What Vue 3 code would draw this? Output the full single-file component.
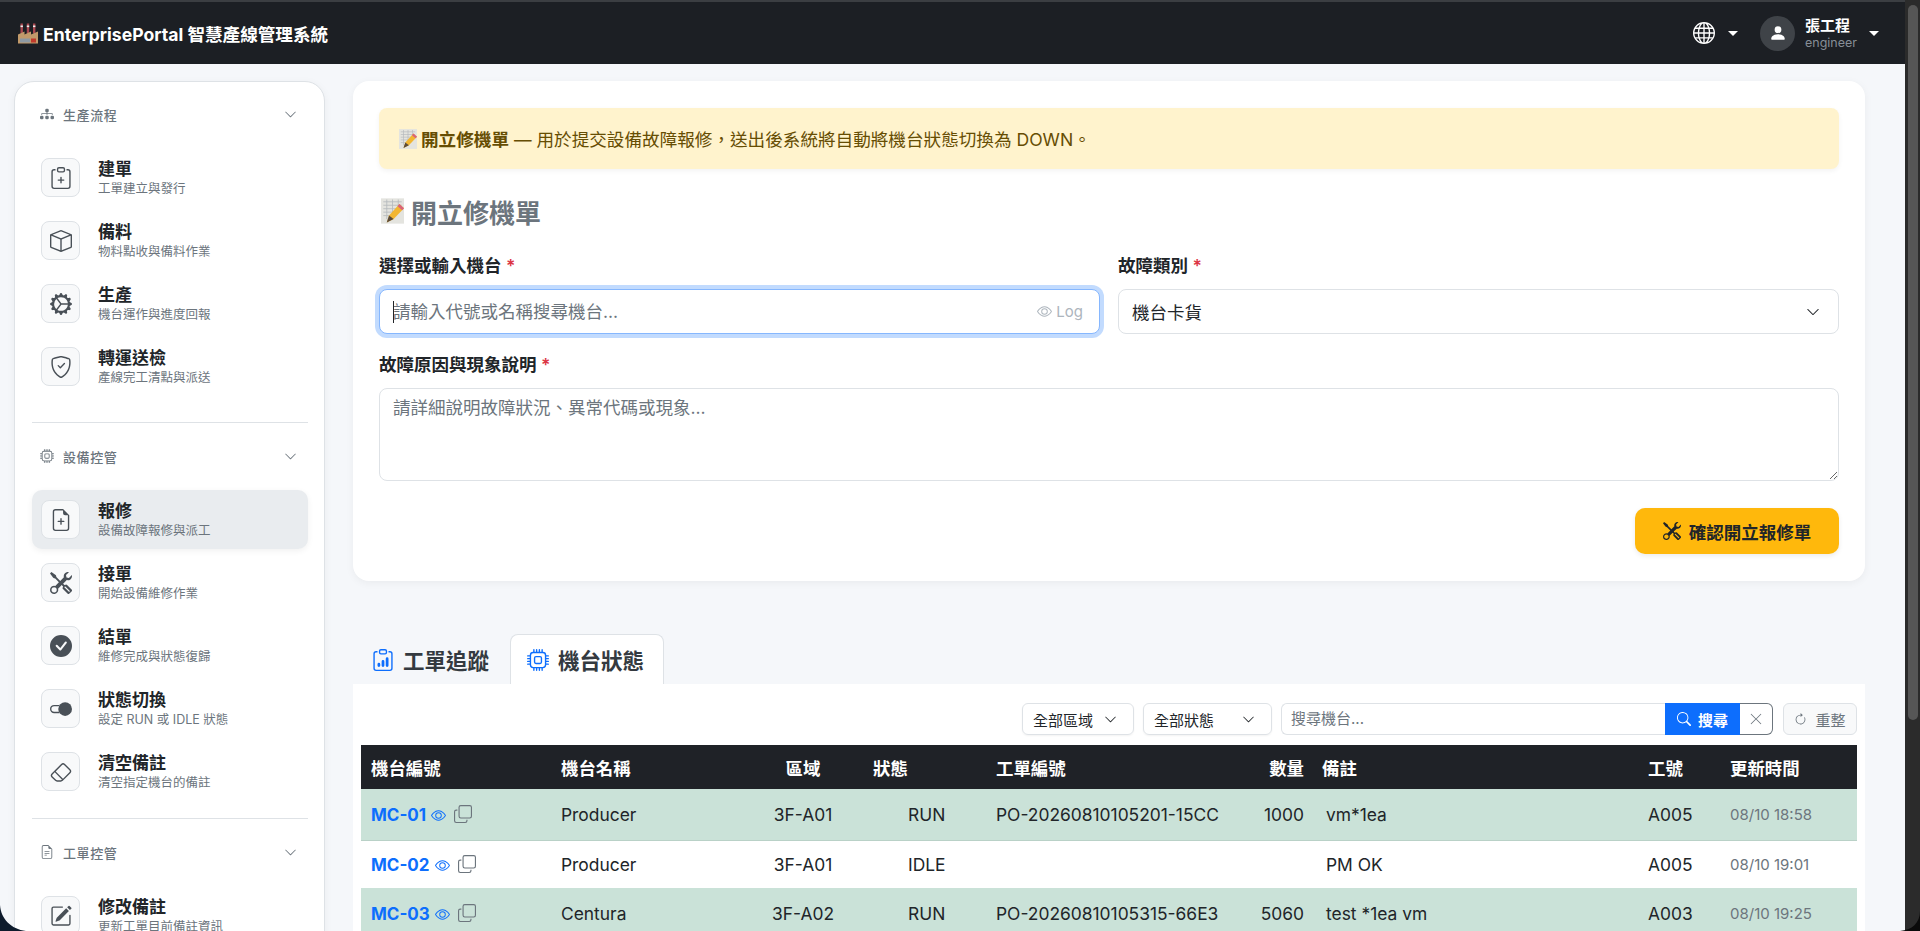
<script setup>
import { h } from 'vue'

const ICONS = {
  clipPlus: ['M8 7a.5.5 0 0 1 .5.5V9H10a.5.5 0 0 1 0 1H8.5v1.5a.5.5 0 0 1-1 0V10H6a.5.5 0 0 1 0-1h1.5V7.5A.5.5 0 0 1 8 7', 'M4 1.5H3a2 2 0 0 0-2 2V14a2 2 0 0 0 2 2h10a2 2 0 0 0 2-2V3.5a2 2 0 0 0-2-2h-1v1h1a1 1 0 0 1 1 1V14a1 1 0 0 1-1 1H3a1 1 0 0 1-1-1V3.5a1 1 0 0 1 1-1h1z', 'M9.5 1a.5.5 0 0 1 .5.5v1a.5.5 0 0 1-.5.5h-3a.5.5 0 0 1-.5-.5v-1a.5.5 0 0 1 .5-.5zm-3-1A1.5 1.5 0 0 0 5 1.5v1A1.5 1.5 0 0 0 6.5 4h3A1.5 1.5 0 0 0 11 2.5v-1A1.5 1.5 0 0 0 9.5 0z'],
  clipData: ['M4 11a1 1 0 1 1 2 0v1a1 1 0 1 1-2 0zm6-4a1 1 0 1 1 2 0v5a1 1 0 1 1-2 0zM7 9a1 1 0 0 1 2 0v3a1 1 0 1 1-2 0z', 'M4 1.5H3a2 2 0 0 0-2 2V14a2 2 0 0 0 2 2h10a2 2 0 0 0 2-2V3.5a2 2 0 0 0-2-2h-1v1h1a1 1 0 0 1 1 1V14a1 1 0 0 1-1 1H3a1 1 0 0 1-1-1V3.5a1 1 0 0 1 1-1h1z', 'M9.5 1a.5.5 0 0 1 .5.5v1a.5.5 0 0 1-.5.5h-3a.5.5 0 0 1-.5-.5v-1a.5.5 0 0 1 .5-.5zm-3-1A1.5 1.5 0 0 0 5 1.5v1A1.5 1.5 0 0 0 6.5 4h3A1.5 1.5 0 0 0 11 2.5v-1A1.5 1.5 0 0 0 9.5 0z'],
  box: ['M8.186 1.113a.5.5 0 0 0-.372 0L1.846 3.5 8 5.961 14.154 3.5zM15 4.239l-6.5 2.6v7.922l6.5-2.6V4.24zM7.5 14.762V6.838L1 4.239v7.925zM7.443.184a1.5 1.5 0 0 1 1.114 0l7.129 2.852A.5.5 0 0 1 16 3.5v8.662a1 1 0 0 1-.629.928l-7.185 2.874a.5.5 0 0 1-.372 0L.63 13.09a1 1 0 0 1-.63-.928V3.5a.5.5 0 0 1 .314-.464z'],
  gear: ['M7.068.727c.243-.97 1.62-.97 1.864 0l.071.286a.96.96 0 0 0 1.622.434l.205-.211c.695-.719 1.888-.03 1.613.931l-.08.284a.96.96 0 0 0 1.187 1.187l.283-.081c.96-.275 1.65.918.931 1.613l-.211.205a.96.96 0 0 0 .434 1.622l.286.071c.97.243.97 1.62 0 1.864l-.286.071a.96.96 0 0 0-.434 1.622l.211.205c.719.695.03 1.888-.931 1.613l-.284-.08a.96.96 0 0 0-1.187 1.187l.081.283c.275.96-.918 1.65-1.613.931l-.205-.211a.96.96 0 0 0-1.622.434l-.071.286c-.243.97-1.62.97-1.864 0l-.071-.286a.96.96 0 0 0-1.622-.434l-.205.211c-.695.719-1.888.03-1.613-.931l.08-.284a.96.96 0 0 0-1.186-1.187l-.284.081c-.96.275-1.65-.918-.931-1.613l.211-.205a.96.96 0 0 0-.434-1.622l-.286-.071c-.97-.243-.97-1.62 0-1.864l.286-.071a.96.96 0 0 0 .434-1.622l-.211-.205c-.719-.695-.03-1.888.931-1.613l.284.08a.96.96 0 0 0 1.187-1.186l-.081-.284c-.275-.96.918-1.65 1.613-.931l.205.211a.96.96 0 0 0 1.622-.434zM12.973 8.5H8.25l-2.834 3.779A4.998 4.998 0 0 0 12.973 8.5m0-1a4.998 4.998 0 0 0-7.557-3.779l2.834 3.78zM5.048 3.967l-.087.065zm-.431.355A4.98 4.98 0 0 0 3.002 8c0 1.455.622 2.765 1.615 3.678L7.375 8 4.617 4.322zm.344 7.646.087.065z'],
  shield: ['M5.338 1.59a61 61 0 0 0-2.837.856.48.48 0 0 0-.328.39c-.554 4.157.726 7.19 2.253 9.188a10.7 10.7 0 0 0 2.287 2.233c.346.244.652.42.893.533q.18.085.293.118a1 1 0 0 0 .101.025 1 1 0 0 0 .1-.025q.114-.034.294-.118c.24-.113.547-.29.893-.533a10.7 10.7 0 0 0 2.287-2.233c1.527-1.997 2.807-5.031 2.253-9.188a.48.48 0 0 0-.328-.39c-.651-.213-1.75-.56-2.837-.855C9.552 1.29 8.531 1.067 8 1.067c-.53 0-1.552.223-2.662.524zM5.072.56C6.157.265 7.31 0 8 0s1.843.265 2.928.56c1.11.3 2.229.655 2.887.87a1.54 1.54 0 0 1 1.044 1.262c.596 4.477-.787 7.795-2.465 9.99a11.8 11.8 0 0 1-2.517 2.453 7 7 0 0 1-1.048.625c-.28.132-.581.24-.829.24s-.548-.108-.829-.24a7 7 0 0 1-1.048-.625 11.8 11.8 0 0 1-2.517-2.453C1.928 10.487.545 7.169 1.141 2.692A1.54 1.54 0 0 1 2.185 1.43 63 63 0 0 1 5.072.56', 'M10.854 5.146a.5.5 0 0 1 0 .708l-3 3a.5.5 0 0 1-.708 0l-1.5-1.5a.5.5 0 1 1 .708-.708L7.5 7.793l2.646-2.647a.5.5 0 0 1 .708 0'],
  filePlus: ['M8 6.5a.5.5 0 0 1 .5.5v1.5H10a.5.5 0 0 1 0 1H8.5V11a.5.5 0 0 1-1 0V9.5H6a.5.5 0 0 1 0-1h1.5V7a.5.5 0 0 1 .5-.5', 'M14 4.5V14a2 2 0 0 1-2 2H4a2 2 0 0 1-2-2V2a2 2 0 0 1 2-2h5.5zm-3 0A1.5 1.5 0 0 1 9.5 3V1H4a1 1 0 0 0-1 1v12a1 1 0 0 0 1 1h8a1 1 0 0 0 1-1V4.5z'],
  tools: ['M1 0 0 1l2.2 3.081a1 1 0 0 0 .815.419h.07a1 1 0 0 1 .708.293l2.675 2.675-2.617 2.654A3.003 3.003 0 0 0 0 13a3 3 0 1 0 5.878-.851l2.654-2.617.968.968-.305.914a1 1 0 0 0 .242 1.023l3.27 3.27a.997.997 0 0 0 1.414 0l1.586-1.586a.997.997 0 0 0 0-1.414l-3.27-3.27a1 1 0 0 0-1.023-.242L10.5 9.5l-.96-.96 2.68-2.643A3.005 3.005 0 0 0 16 3q0-.405-.102-.777l-2.14 2.141L12 4l-.364-1.757L13.777.102a3 3 0 0 0-3.675 3.68L7.462 6.46 4.793 3.793a1 1 0 0 1-.293-.707v-.071a1 1 0 0 0-.419-.814zm9.646 10.646a.5.5 0 0 1 .708 0l2.914 2.915a.5.5 0 0 1-.707.707l-2.915-2.914a.5.5 0 0 1 0-.708M3 11l.471.242.529.026.287.445.445.287.026.529L5 13l-.242.471-.026.529-.445.287-.287.445-.529.026L3 15l-.471-.242L2 14.732l-.287-.445L1.268 14l-.026-.529L1 13l.242-.471.026-.529.445-.287.287-.445.529-.026z'],
  check: ['M16 8A8 8 0 1 1 0 8a8 8 0 0 1 16 0m-3.97-3.03a.75.75 0 0 0-1.08.022L7.477 9.417 5.384 7.323a.75.75 0 0 0-1.06 1.06L6.97 11.03a.75.75 0 0 0 1.079-.02l3.992-4.99a.75.75 0 0 0-.01-1.05z'],
  toggle: ['M7 5H3a3 3 0 0 0 0 6h4a5 5 0 0 1-.584-1H3a2 2 0 1 1 0-4h3.416q.235-.537.584-1', 'M16 8A5 5 0 1 1 6 8a5 5 0 0 1 10 0'],
  eraser: ['M8.086 2.207a2 2 0 0 1 2.828 0l3.879 3.879a2 2 0 0 1 0 2.828l-5.5 5.5A2 2 0 0 1 7.879 15H5.12a2 2 0 0 1-1.414-.586l-2.5-2.5a2 2 0 0 1 0-2.828zm2.121.707a1 1 0 0 0-1.414 0L4.16 7.547l5.293 5.293 4.633-4.633a1 1 0 0 0 0-1.414zM8.746 13.547 3.453 8.254 1.914 9.793a1 1 0 0 0 0 1.414l2.5 2.5a1 1 0 0 0 .707.293H7.88a1 1 0 0 0 .707-.293z'],
  pencil: ['M15.502 1.94a.5.5 0 0 1 0 .706L14.459 3.69l-2-2L13.502.646a.5.5 0 0 1 .707 0l1.293 1.293zm-1.75 2.456-2-2L4.939 9.21a.5.5 0 0 0-.121.196l-.805 2.414a.25.25 0 0 0 .316.316l2.414-.805a.5.5 0 0 0 .196-.12l6.813-6.814z', 'M1 13.5A1.5 1.5 0 0 0 2.5 15h11a1.5 1.5 0 0 0 1.5-1.5v-6a.5.5 0 0 0-1 0v6a.5.5 0 0 1-.5.5h-11a.5.5 0 0 1-.5-.5v-11a.5.5 0 0 1 .5-.5H9a.5.5 0 0 0 0-1H2.5A1.5 1.5 0 0 0 1 2.5z'],
  diagram: ['M6 3.5A1.5 1.5 0 0 1 7.5 2h1A1.5 1.5 0 0 1 10 3.5v1A1.5 1.5 0 0 1 8.5 6v1H14a.5.5 0 0 1 .5.5v1a.5.5 0 0 1-1 0V8h-5v.5a.5.5 0 0 1-1 0V8h-5v.5a.5.5 0 0 1-1 0v-1A.5.5 0 0 1 2 7h5.5V6A1.5 1.5 0 0 1 6 4.5zm-6 8A1.5 1.5 0 0 1 1.5 10h1A1.5 1.5 0 0 1 4 11.5v1A1.5 1.5 0 0 1 2.5 14h-1A1.5 1.5 0 0 1 0 12.5zm6 0A1.5 1.5 0 0 1 7.5 10h1a1.5 1.5 0 0 1 1.5 1.5v1A1.5 1.5 0 0 1 8.5 14h-1A1.5 1.5 0 0 1 6 12.5zm6 0a1.5 1.5 0 0 1 1.5-1.5h1a1.5 1.5 0 0 1 1.5 1.5v1a1.5 1.5 0 0 1-1.5 1.5h-1a1.5 1.5 0 0 1-1.5-1.5z'],
  cpu: ['M5 0a.5.5 0 0 1 .5.5V2h1V.5a.5.5 0 0 1 1 0V2h1V.5a.5.5 0 0 1 1 0V2h1V.5a.5.5 0 0 1 1 0V2A2.5 2.5 0 0 1 14 4.5h1.5a.5.5 0 0 1 0 1H14v1h1.5a.5.5 0 0 1 0 1H14v1h1.5a.5.5 0 0 1 0 1H14v1h1.5a.5.5 0 0 1 0 1H14a2.5 2.5 0 0 1-2.5 2.5v1.5a.5.5 0 0 1-1 0V14h-1v1.5a.5.5 0 0 1-1 0V14h-1v1.5a.5.5 0 0 1-1 0V14h-1v1.5a.5.5 0 0 1-1 0V14A2.5 2.5 0 0 1 2 11.5H.5a.5.5 0 0 1 0-1H2v-1H.5a.5.5 0 0 1 0-1H2v-1H.5a.5.5 0 0 1 0-1H2v-1H.5a.5.5 0 0 1 0-1H2A2.5 2.5 0 0 1 4.5 2V.5A.5.5 0 0 1 5 0m-.5 3A1.5 1.5 0 0 0 3 4.5v7A1.5 1.5 0 0 0 4.5 13h7a1.5 1.5 0 0 0 1.5-1.5v-7A1.5 1.5 0 0 0 11.5 3zM5 6.5A1.5 1.5 0 0 1 6.5 5h3A1.5 1.5 0 0 1 11 6.5v3A1.5 1.5 0 0 1 9.5 11h-3A1.5 1.5 0 0 1 5 9.5zM6.5 6a.5.5 0 0 0-.5.5v3a.5.5 0 0 0 .5.5h3a.5.5 0 0 0 .5-.5v-3a.5.5 0 0 0-.5-.5z'],
  fileText: ['M5.5 7a.5.5 0 0 0 0 1h5a.5.5 0 0 0 0-1zM5 9.5a.5.5 0 0 1 .5-.5h5a.5.5 0 0 1 0 1h-5a.5.5 0 0 1-.5-.5m0 2a.5.5 0 0 1 .5-.5h2a.5.5 0 0 1 0 1h-2a.5.5 0 0 1-.5-.5', 'M9.5 0H4a2 2 0 0 0-2 2v12a2 2 0 0 0 2 2h8a2 2 0 0 0 2-2V4.5zm0 1v2A1.5 1.5 0 0 0 11 4.5h2V14a1 1 0 0 1-1 1H4a1 1 0 0 1-1-1V2a1 1 0 0 1 1-1z'],
  globe: ['M0 8a8 8 0 1 1 16 0A8 8 0 0 1 0 8m7.5-6.923c-.67.204-1.335.82-1.887 1.855A8 8 0 0 0 5.145 4H7.5zM4.09 4a9.3 9.3 0 0 1 .64-1.539 7 7 0 0 1 .597-.933A7.03 7.03 0 0 0 2.255 4zm-.582 3.5c.03-.877.138-1.718.312-2.5H1.674a7 7 0 0 0-.656 2.5zM4.847 5a12.5 12.5 0 0 0-.338 2.5H7.5V5zM8.5 5v2.5h2.99a12.5 12.5 0 0 0-.337-2.5zM4.51 8.5a12.5 12.5 0 0 0 .337 2.5H7.5V8.5zm3.99 0V11h2.653c.187-.765.306-1.608.338-2.5zM5.145 12q.208.58.468 1.068c.552 1.035 1.218 1.65 1.887 1.855V12zm.182 2.472a7 7 0 0 1-.597-.933A9.3 9.3 0 0 1 4.09 12H2.255a7 7 0 0 0 3.072 2.472M3.82 11a13.7 13.7 0 0 1-.312-2.5h-2.49c.062.89.291 1.733.656 2.5zm6.853 3.472A7 7 0 0 0 13.745 12H11.91a9.3 9.3 0 0 1-.64 1.539 7 7 0 0 1-.597.933M8.5 12v2.923c.67-.204 1.335-.82 1.887-1.855q.26-.487.468-1.068zm3.68-1h2.146c.365-.767.594-1.61.656-2.5h-2.49a13.7 13.7 0 0 1-.312 2.5m2.802-3.5a7 7 0 0 0-.656-2.5H12.18c.174.782.282 1.623.312 2.5zM11.27 2.461c.247.464.462.98.64 1.539h1.835a7 7 0 0 0-3.072-2.472c.218.284.418.598.597.933M10.855 4a8 8 0 0 0-.468-1.068C9.835 1.897 9.17 1.282 8.5 1.077V4z'],
  person: ['M3 14s-1 0-1-1 1-4 6-4 6 3 6 4-1 1-1 1zm5-6a3 3 0 1 0 0-6 3 3 0 0 0 0 6'],
  eye: ['M16 8s-3-5.5-8-5.5S0 8 0 8s3 5.5 8 5.5S16 8 16 8M1.173 8a13 13 0 0 1 1.66-2.043C4.12 4.668 5.88 3.5 8 3.5s3.879 1.168 5.168 2.457A13 13 0 0 1 14.828 8q-.086.13-.195.288c-.335.48-.83 1.12-1.465 1.755C11.879 11.332 10.119 12.5 8 12.5s-3.879-1.168-5.168-2.457A13 13 0 0 1 1.172 8z', 'M8 5.5a2.5 2.5 0 1 0 0 5 2.5 2.5 0 0 0 0-5M4.5 8a3.5 3.5 0 1 1 7 0 3.5 3.5 0 0 1-7 0'],
  copy: ['M4 2a2 2 0 0 1 2-2h8a2 2 0 0 1 2 2v8a2 2 0 0 1-2 2H6a2 2 0 0 1-2-2zm2-1a1 1 0 0 0-1 1v8a1 1 0 0 0 1 1h8a1 1 0 0 0 1-1V2a1 1 0 0 0-1-1zM2 5a1 1 0 0 0-1 1v8a1 1 0 0 0 1 1h8a1 1 0 0 0 1-1v-1h1v1a2 2 0 0 1-2 2H2a2 2 0 0 1-2-2V6a2 2 0 0 1 2-2h1v1z'],
  search: ['M11.742 10.344a6.5 6.5 0 1 0-1.397 1.398h-.001q.044.06.098.115l3.85 3.85a1 1 0 0 0 1.415-1.414l-3.85-3.85a1 1 0 0 0-.115-.1zM12 6.5a5.5 5.5 0 1 1-11 0 5.5 5.5 0 0 1 11 0'],
  x: ['M2.146 2.854a.5.5 0 1 1 .708-.708L8 7.293l5.146-5.147a.5.5 0 0 1 .708.708L8.707 8l5.147 5.146a.5.5 0 0 1-.708.708L8 8.707l-5.146 5.147a.5.5 0 0 1-.708-.708L7.293 8z'],
  reload: ['M8 3a5 5 0 1 0 4.546 2.914.5.5 0 0 1 .908-.417A6 6 0 1 1 8 2z', 'M8 4.466V.534a.25.25 0 0 1 .41-.192l2.36 1.966c.12.1.12.284 0 .384L8.41 4.658A.25.25 0 0 1 8 4.466'],
  chevron: ['M1.646 4.646a.5.5 0 0 1 .708 0L8 10.293l5.646-5.647a.5.5 0 0 1 .708.708l-6 6a.5.5 0 0 1-.708 0l-6-6a.5.5 0 0 1 0-.708'],
}

const Icon = (props) =>
  h('svg', { viewBox: '0 0 16 16', fill: 'currentColor', 'aria-hidden': 'true' },
    ICONS[props.n].map((d) => h('path', { d })))
Icon.props = ['n']

const sections = [
  { title: '生產流程', icon: 'diagram', cls: 'sec-a', items: [
    { t: '建單', s: '工單建立與發行', i: 'clipPlus' },
    { t: '備料', s: '物料點收與備料作業', i: 'box' },
    { t: '生產', s: '機台運作與進度回報', i: 'gear' },
    { t: '轉運送檢', s: '產線完工清點與派送', i: 'shield' },
  ] },
  { title: '設備控管', icon: 'cpu', cls: 'sec-b', items: [
    { t: '報修', s: '設備故障報修與派工', i: 'filePlus', active: true },
    { t: '接單', s: '開始設備維修作業', i: 'tools' },
    { t: '結單', s: '維修完成與狀態復歸', i: 'check' },
    { t: '狀態切換', s: '設定 RUN 或 IDLE 狀態', i: 'toggle' },
    { t: '清空備註', s: '清空指定機台的備註', i: 'eraser' },
  ] },
  { title: '工單控管', icon: 'fileText', cls: 'sec-c', items: [
    { t: '修改備註', s: '更新工單目前備註資訊', i: 'pencil' },
  ] },
]

const rows = [
  { id: 'MC-01', name: 'Producer', area: '3F-A01', st: 'RUN', po: 'PO-20260810105201-15CC', qty: '1000', note: 'vm*1ea', op: 'A005', time: '08/10 18:58' },
  { id: 'MC-02', name: 'Producer', area: '3F-A01', st: 'IDLE', po: '', qty: '', note: 'PM OK', op: 'A005', time: '08/10 19:01' },
  { id: 'MC-03', name: 'Centura', area: '3F-A02', st: 'RUN', po: 'PO-20260810105315-66E3', qty: '5060', note: 'test *1ea vm', op: 'A003', time: '08/10 19:25' },
]
</script>

<template>
  <div class="shell">
    <div class="page">
      <header class="topbar">
        <div class="brand">
          <svg class="emoji factory" viewBox="0 0 20 20" aria-hidden="true">
            <rect x="2.5" y="0" width="2.4" height="10" fill="#a9474f" />
            <rect x="8.8" y="0" width="2.4" height="10" fill="#a9474f" />
            <rect x="15" y="0" width="2.4" height="10" fill="#a9474f" />
            <rect x="2.5" y="2" width="2.4" height="1.6" fill="#eee" />
            <rect x="8.8" y="2" width="2.4" height="1.6" fill="#eee" />
            <rect x="15" y="2" width="2.4" height="1.6" fill="#eee" />
            <polygon points="0,20 0,11 6.5,8 6.5,11 13,8 13,11 20,8 20,20" fill="#c19a6b" />
            <rect x="2" y="15" width="10" height="4" fill="#8d99a3" />
            <rect x="13" y="15" width="5" height="4" fill="#c0392b" />
          </svg>
          <span>EnterprisePortal 智慧產線管理系統</span>
        </div>
        <div class="top-right">
          <Icon n="globe" class="globe" />
          <i class="caret globe-caret"></i>
          <span class="avatar"><Icon n="person" /></span>
          <span class="who"><b>張工程</b><small>engineer</small></span>
          <i class="caret"></i>
        </div>
      </header>

      <div class="body">
        <aside class="sidebar">
          <section v-for="sec in sections" :key="sec.title" :class="sec.cls">
            <div class="sec-head">
              <Icon :n="sec.icon" class="sec-icon" />
              <span class="sec-title">{{ sec.title }}</span>
              <Icon n="chevron" class="sec-chev" />
            </div>
            <div v-for="it in sec.items" :key="it.t" class="item" :class="{ active: it.active }">
              <span class="item-box"><Icon :n="it.i" /></span>
              <span class="item-text"><b>{{ it.t }}</b><small>{{ it.s }}</small></span>
            </div>
          </section>
        </aside>

        <main class="main">
          <div class="card">
            <div class="alert">
              <svg class="emoji memo" viewBox="0 0 20 22" aria-hidden="true">
                <rect x="0" y="0" width="20" height="22" fill="#e4e4df" />
                <path d="M2 3h16M2 6h16M2 9h16M2 12h10M2 15h6M5 1v17M10 1v12M15 1v8" stroke="#b4b8bc" stroke-width=".7" />
                <polygon points="5,21 7,15 16,5 20,8.5 11,18" fill="#f2b632" />
                <polygon points="16,5 20,8.5 18.4,10.3 14.4,6.8" fill="#d9637a" />
                <polygon points="5,21 7,15 11,18" fill="#5a4a3a" />
              </svg>
              <b>開立修機單</b> — 用於提交設備故障報修，送出後系統將自動將機台狀態切換為 DOWN。
            </div>
            <h2 class="form-title">
              <svg class="emoji memo-lg" viewBox="0 0 20 22" aria-hidden="true">
                <rect x="0" y="0" width="20" height="22" fill="#e4e4df" />
                <path d="M2 3h16M2 6h16M2 9h16M2 12h10M2 15h6M5 1v17M10 1v12M15 1v8" stroke="#b4b8bc" stroke-width=".7" />
                <polygon points="5,21 7,15 16,5 20,8.5 11,18" fill="#f2b632" />
                <polygon points="16,5 20,8.5 18.4,10.3 14.4,6.8" fill="#d9637a" />
                <polygon points="5,21 7,15 11,18" fill="#5a4a3a" />
              </svg>
              開立修機單
            </h2>
            <div class="fields">
              <div>
                <label class="lbl">選擇或輸入機台 <em>*</em></label>
                <div class="input-wrap">
                  <input class="ctl focus" placeholder="請輸入代號或名稱搜尋機台..." />
                  <i class="cursor"></i>
                  <span class="log"><Icon n="eye" />Log</span>
                </div>
              </div>
              <div>
                <label class="lbl">故障類別 <em>*</em></label>
                <div class="ctl select-ctl">機台卡貨<Icon n="chevron" /></div>
              </div>
            </div>
            <label class="lbl lbl2">故障原因與現象說明 <em>*</em></label>
            <textarea class="ctl area" placeholder="請詳細說明故障狀況、異常代碼或現象..."></textarea>
            <div class="actions">
              <button class="submit"><Icon n="tools" />確認開立報修單</button>
            </div>
          </div>

          <nav class="tabs">
            <div class="tab"><Icon n="clipData" />工單追蹤</div>
            <div class="tab on"><Icon n="cpu" />機台狀態</div>
          </nav>

          <div class="panel">
            <div class="filters">
              <div class="fsel w1">全部區域<Icon n="chevron" /></div>
              <div class="fsel w2">全部狀態<Icon n="chevron" /></div>
              <div class="search">
                <span class="q">搜尋機台...</span>
                <span class="go"><Icon n="search" />搜尋</span>
                <span class="clr"><Icon n="x" /></span>
              </div>
              <div class="reset"><Icon n="reload" />重整</div>
            </div>
            <table>
              <colgroup>
                <col class="k1" /><col class="k2" /><col class="k3" />
                <col class="k4" /><col class="k5" /><col class="k6" />
                <col class="k7" /><col class="k8" /><col class="k9" />
              </colgroup>
              <thead>
                <tr>
                  <th>機台編號</th><th>機台名稱</th><th class="c">區域</th><th class="sth">狀態</th>
                  <th>工單編號</th><th class="r">數量</th><th class="nth">備註</th><th>工號</th><th>更新時間</th>
                </tr>
              </thead>
              <tbody>
                <tr v-for="r in rows" :key="r.id" :class="{ run: r.st === 'RUN' }">
                  <td class="idc"><a>{{ r.id }}</a><Icon n="eye" class="e" /><Icon n="copy" class="cp" /></td>
                  <td>{{ r.name }}</td>
                  <td class="c">{{ r.area }}</td>
                  <td class="std">{{ r.st }}</td>
                  <td>{{ r.po }}</td>
                  <td class="r">{{ r.qty }}</td>
                  <td class="ntd">{{ r.note }}</td>
                  <td>{{ r.op }}</td>
                  <td class="tm">{{ r.time }}</td>
                </tr>
              </tbody>
            </table>
          </div>
        </main>
      </div>
    </div>
    <div class="scrollbar"><i></i></div>
    <svg class="corner bl" viewBox="0 0 26 26" aria-hidden="true"><path d="M0 0C1 14 11 24 26 26H0Z" fill="#0e1b2c" /></svg>
    <svg class="corner br" viewBox="0 0 24 24" aria-hidden="true"><path d="M24 4C24 16 16 23 4 24H24Z" fill="#0a0a0a" /></svg>
  </div>
</template>

<style>
html, body { margin: 0; background: #f5f7fa; overflow: hidden; }
</style>

<style scoped>
* { box-sizing: border-box; }
.shell {
  position: relative; display: flex; height: 100vh; overflow: hidden; background: #f5f7fa;
  font-family: Inter, "Noto Sans CJK TC", sans-serif; color: #212529; font-size: 17.5px;
}
.page { flex: 1; min-width: 0; overflow: hidden; }
.scrollbar { width: 15px; background: #2b2b2b; padding: 5px 2px 0 3px; }
.scrollbar i { display: block; width: 10px; height: 715px; border-radius: 5px; background: #565656; }
.corner { position: absolute; bottom: 0; width: 26px; height: 26px; }
.corner.bl { left: 0; }
.corner.br { right: 0; width: 24px; height: 24px; }

.topbar {
  height: 64px; display: flex; align-items: center; justify-content: space-between;
  background: #1c1f24; border-top: 2px solid #3b3e42; color: #fff; padding: 0 26px 0 18px;
}
.brand { display: flex; align-items: center; gap: 5px; font-weight: 700; font-size: 17.6px; }
.emoji { flex: none; display: inline-block; }
.factory { width: 20px; height: 21px; }
.top-right { display: flex; align-items: center; }
.globe { width: 22px; height: 22px; color: #fff; }
.caret { display: block; width: 0; height: 0; border: 5px solid transparent; border-top-color: #fff; border-bottom: 0; }
.globe-caret { margin: 0 22px 0 13px; }
.avatar {
  width: 35px; height: 35px; border-radius: 50%; background: #3f4348; display: flex;
  align-items: center; justify-content: center; margin-right: 10px;
}
.avatar svg { width: 18px; height: 18px; }
.who { display: flex; flex-direction: column; width: 64px; }
.who b { font-size: 15px; line-height: 19px; font-weight: 700; }
.who small { font-size: 12.5px; line-height: 15px; color: #868e96; }

.body { display: flex; align-items: flex-start; gap: 28px; padding: 17px 40px 0 14px; }

.sidebar {
  flex: none; width: 311px; background: #fff; border: 1px solid #dee2e6; border-radius: 20px;
  padding: 14px 16px 16px 17px; box-shadow: 0 2px 8px rgba(0,0,0,.05);
}
.sec-head { height: 36px; display: flex; align-items: center; padding: 0 11px 0 8px; margin-bottom: 16px; color: #6c757d; }
.sec-icon { width: 14px; height: 14px; margin-right: 9px; }
.sec-title { flex: 1; font-size: 13px; font-weight: 500; letter-spacing: .6px; }
.sec-chev { width: 13px; height: 13px; }
.sec-a, .sec-b { border-bottom: 1px solid #dee2e6; }
.sec-a { padding-bottom: 22px; margin-bottom: 15px; }
.sec-b { padding-bottom: 13px; margin-bottom: 15px; }
.item { display: flex; align-items: center; gap: 18px; padding: 10px 9px; margin-bottom: 4px; border-radius: 10px; height: 59px; }
.item.active { background: #e9ecef; box-shadow: 0 2px 6px rgba(0,0,0,.06); }
.item-box {
  flex: none; width: 39px; height: 39px; border: 1px solid #dee2e6; border-radius: 8px; background: #f8f9fa;
  display: flex; align-items: center; justify-content: center; color: #495057;
}
.item-box svg { width: 22px; height: 22px; }
.item-text { display: flex; flex-direction: column; white-space: nowrap; }
.item-text b { font-size: 17px; line-height: 22px; font-weight: 700; color: #212529; }
.item-text small { font-size: 12.5px; line-height: 17px; color: #6c757d; }

.main { flex: none; width: 1512px; }
.card { background: #fff; border-radius: 16px; padding: 27px 26px; box-shadow: 0 2px 8px rgba(0,0,0,.05); }
.alert {
  height: 61px; display: flex; align-items: center; white-space: pre-wrap; background: #fff3cd; color: #664d03;
  border-radius: 8px; padding: 0 20px; box-shadow: 0 2px 5px rgba(0,0,0,.05); font-size: 17.6px;
}
.memo { width: 18px; height: 20px; margin-right: 4px; }
.form-title { margin: 22px 0 0; height: 40px; display: flex; align-items: center; font-size: 26px; font-weight: 700; color: #6c757d; padding-left: 2px; }
.memo-lg { width: 23px; height: 26px; margin-right: 7px; }
.fields { display: grid; grid-template-columns: 1fr 1fr; gap: 18px; margin-top: 23px; }
.lbl { display: block; font-weight: 600; line-height: 24px; height: 24px; margin-bottom: 11px; }
.lbl em { color: #dc3545; font-style: normal; line-height: 1; }
.lbl2 { margin-top: 19px; }
.ctl {
  display: block; width: 100%; height: 45px; border: 1px solid #dee2e6; border-radius: 8px; background: #fff;
  padding: 0 13px; font: inherit; color: #212529; outline: none;
}
.ctl::placeholder { color: #6c757d; opacity: 1; }
.focus { border-color: #86b7fe; box-shadow: 0 0 0 4px rgba(13,110,253,.25); }
.input-wrap { position: relative; }
.cursor { position: absolute; left: 14px; top: 12px; width: 1px; height: 22px; background: #212529; }
.log { position: absolute; right: 17px; top: 0; height: 45px; display: flex; align-items: center; gap: 4px; font-size: 15px; color: #adb5bd; }
.log svg { width: 15px; height: 15px; }
.select-ctl { display: flex; align-items: center; justify-content: space-between; padding-right: 18px; }
.select-ctl svg { width: 14px; height: 14px; }
.area { height: 93px; padding-top: 7px; line-height: 24px; resize: vertical; }
.actions { display: flex; justify-content: flex-end; margin-top: 27px; }
.submit {
  width: 204px; height: 46px; border: 0; border-radius: 10px; background: #ffb80c; color: #212529;
  font: inherit; font-weight: 600; display: flex; align-items: center; justify-content: center; gap: 8px;
  box-shadow: 0 2px 5px rgba(0,0,0,.08);
}
.submit svg { width: 18px; height: 18px; }

.tabs { display: flex; margin-top: 53px; padding-left: 8px; height: 50px; }
.tab {
  display: flex; align-items: center; gap: 9px; padding: 0 17px 0 10px; font-size: 21.5px; font-weight: 600;
  width: 149px; border: 1px solid transparent; border-bottom: 0; border-radius: 8px 8px 0 0; color: #343a40;
}
.tab svg { width: 22px; height: 22px; color: #0d6efd; flex: none; }
.tab.on { width: 154px; background: #fff; border-color: #dee2e6; padding: 0 0 0 16px; }

.panel { background: #fff; padding: 19px 8px 0; }
.filters { display: flex; justify-content: flex-end; align-items: center; height: 32px; margin-bottom: 10px; font-size: 15px; }
.fsel {
  height: 32px; display: flex; align-items: center; justify-content: space-between; border: 1px solid #dee2e6;
  border-radius: 6px; padding: 0 16px 0 10px; margin-right: 9px; box-shadow: 0 1px 2px rgba(0,0,0,.05);
}
.fsel svg { width: 13px; height: 13px; }
.w1 { width: 112px; } .w2 { width: 129px; }
.search { width: 492px; height: 32px; display: flex; align-items: stretch; }
.q { flex: 1; padding-left: 9px; line-height: 30px; color: #6c757d; border: 1px solid #dee2e6; border-right: 0; border-radius: 6px 0 0 6px; }
.go { width: 75px; background: #0d6efd; color: #fff; display: flex; align-items: center; justify-content: center; gap: 7px; font-weight: 600; }
.go svg { width: 14px; height: 14px; }
.clr { width: 33px; display: flex; align-items: center; justify-content: center; color: #6c757d; border: 1px solid #6c757d; border-left: 0; border-radius: 0 6px 6px 0; }
.clr svg { width: 14px; height: 14px; }
.reset {
  width: 74px; height: 32px; margin-left: 10px; border: 1px solid #dee2e6; border-radius: 6px; background: #f8f9fa;
  color: #6c757d; display: flex; align-items: center; justify-content: center; gap: 8px;
}
.reset svg { width: 13px; height: 13px; }

table { width: 1496px; table-layout: fixed; border-collapse: collapse; }
.k1 { width: 190px; } .k2 { width: 202px; } .k3 { width: 100px; } .k4 { width: 133px; } .k5 { width: 244px; }
.k6 { width: 84px; } .k7 { width: 324px; } .k8 { width: 82px; } .k9 { width: 137px; }
th { height: 44px; background: #1f2227; color: #fff; font-weight: 700; text-align: left; padding: 0 10px; font-size: 17.4px; white-space: nowrap; }
td { height: 48px; padding: 0 10px; white-space: nowrap; font-size: 17.4px; background: #fff; }
tr.run td { height: 51px; background: #cae2d8; border-bottom: 1px solid #b9d1c7; }
.c { text-align: center; }
.r { text-align: right; }
.sth { padding-left: 20px; }
.std { padding-left: 55px; }
.nth { padding-left: 8px; }
.ntd { padding-left: 12px; }
td.tm { font-size: 15px; color: #6c757d; }
.idc a { color: #0d6efd; font-weight: 700; font-size: 17px; }
.idc .e { width: 15px; height: 15px; margin-left: 5px; color: #0d6efd; vertical-align: -2px; }
.idc .cp { width: 18px; height: 18px; margin-left: 8px; color: #6c757d; vertical-align: -2px; }
</style>
